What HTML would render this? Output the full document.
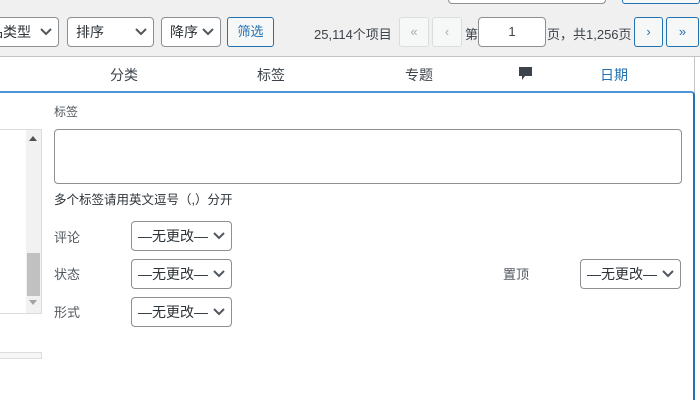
<!DOCTYPE html><html style="width:700px;height:400px;overflow:hidden"><head><meta charset="utf-8"><style>
*{box-sizing:border-box;margin:0;padding:0}
body{width:700px;height:400px;overflow:hidden;position:relative;background:#fff;font-family:"Liberation Sans","Noto Sans CJK SC",sans-serif;font-size:13px;color:#3c434a}
.a{position:absolute}
.sel{position:absolute;background:#fff;border:1px solid #8c8f94;border-radius:4px;font-size:14px;color:#2c3338;padding-left:8px;line-height:28px}
.sel svg{position:absolute;right:6px;top:10px}
.btn{position:absolute;border:1px solid #c3c4c7;border-radius:3px;background:#f6f7f7;color:#a7aaad;text-align:center;line-height:27px;font-size:13px}
.bl{border-color:#2271b1;color:#2271b1}
.lbl{position:absolute;font-size:13px;color:#50575e}
</style></head><body>
<div class="a" style="left:0;top:0;width:700px;height:57px;background:#f0f0f1;border-bottom:1px solid #c3c4c7"></div>
<div class="a" style="left:448px;top:-10px;width:158px;height:14px;background:#fff;border:1px solid #8c8f94;border-radius:4px"></div>
<div class="a" style="left:622px;top:-10px;width:78px;height:14px;background:#f6f7f7;border:1px solid #2271b1;border-radius:3px"></div>
<div class="sel" style="left:-20px;top:17px;width:79px;height:30px">品类型<svg width="12" height="8"><path d="M1 1l5 5 5-5" stroke="#50575e" stroke-width="2" fill="none"/></svg></div>
<div class="sel" style="left:67px;top:17px;width:87px;height:30px">排序<svg width="12" height="8"><path d="M1 1l5 5 5-5" stroke="#50575e" stroke-width="2" fill="none"/></svg></div>
<div class="sel" style="left:161px;top:17px;width:60px;height:30px">降序<svg width="12" height="8"><path d="M1 1l5 5 5-5" stroke="#50575e" stroke-width="2" fill="none"/></svg></div>
<div class="btn bl" style="left:227px;top:17px;width:47px;height:30px;border-radius:3px">筛选</div>
<div class="a" style="left:314px;top:24px;font-size:13px">25,114个项目</div>
<div class="btn" style="left:399px;top:17px;width:30px;height:30px;border-color:#dcdcde">«</div>
<div class="btn" style="left:432px;top:17px;width:30px;height:30px;border-color:#dcdcde">‹</div>
<div class="a" style="left:465px;top:24px">第</div>
<div class="a" style="left:478px;top:17px;width:68px;height:30px;background:#fff;border:1px solid #8c8f94;border-radius:4px;text-align:center;line-height:28px">1</div>
<div class="a" style="left:547px;top:24px">页，共1,256页</div>
<div class="btn bl" style="left:634px;top:17px;width:29px;height:30px">›</div>
<div class="btn bl" style="left:666px;top:17px;width:33px;height:30px">»</div>
<div class="a" style="left:-5px;top:57px;width:700px;height:36px;border-right:1px solid #c3c4c7"></div>
<div class="a" style="left:110px;top:65px;font-size:14px">分类</div>
<div class="a" style="left:257px;top:65px;font-size:14px">标签</div>
<div class="a" style="left:405px;top:65px;font-size:14px">专题</div>
<svg class="a" style="left:518px;top:66px" width="15" height="16"><path d="M1 1h13v9H7l-3 4v-4H1z" fill="#3c434a"/></svg>
<div class="a" style="left:600px;top:65px;font-size:14px;color:#2271b1">日期</div>
<div class="a" style="left:-10px;top:91px;width:705px;height:309px;border:2px solid #2271b1;border-bottom:none;border-radius:4px 4px 0 0;border-top-color:#4f94d4"></div>
<div class="lbl" style="left:54px;top:103px;font-size:12px">标签</div>
<div class="a" style="left:54px;top:129px;width:628px;height:55px;border:1px solid #8c8f94;border-radius:4px"></div>
<div class="a" style="left:54px;top:189px;font-size:12.5px;color:#2c3338">多个标签请用英文逗号（,）分开</div>
<div class="lbl" style="left:54px;top:227px">评论</div>
<div class="lbl" style="left:54px;top:264px">状态</div>
<div class="lbl" style="left:54px;top:302px">形式</div>
<div class="lbl" style="left:503px;top:264px">置顶</div>
<div class="sel" style="left:131px;top:221px;width:101px;height:30px;padding-left:6px">—无更改—<svg width="12" height="8"><path d="M1 1l5 5 5-5" stroke="#50575e" stroke-width="2" fill="none"/></svg></div>
<div class="sel" style="left:131px;top:259px;width:101px;height:30px;padding-left:6px">—无更改—<svg width="12" height="8"><path d="M1 1l5 5 5-5" stroke="#50575e" stroke-width="2" fill="none"/></svg></div>
<div class="sel" style="left:131px;top:297px;width:101px;height:30px;padding-left:6px">—无更改—<svg width="12" height="8"><path d="M1 1l5 5 5-5" stroke="#50575e" stroke-width="2" fill="none"/></svg></div>
<div class="sel" style="left:580px;top:259px;width:101px;height:30px;padding-left:6px">—无更改—<svg width="12" height="8"><path d="M1 1l5 5 5-5" stroke="#50575e" stroke-width="2" fill="none"/></svg></div>
<div class="a" style="left:-5px;top:129px;width:47px;height:185px;border:1px solid #dcdcde;background:#fff"></div>
<div class="a" style="left:26px;top:130px;width:15px;height:183px;background:#f1f1f1"></div>
<svg class="a" style="left:29px;top:136px" width="8" height="5"><path d="M0 5L4 0 8 5z" fill="#505050"/></svg>
<svg class="a" style="left:29px;top:300px" width="8" height="5"><path d="M0 0L4 5 8 0z" fill="#a3a3a3"/></svg>
<div class="a" style="left:27px;top:253px;width:13px;height:43px;background:#c1c1c1"></div>
<div class="a" style="left:-5px;top:352px;width:47px;height:7px;border:1px solid #dcdcde;background:#f6f6f6"></div>
</body></html>
